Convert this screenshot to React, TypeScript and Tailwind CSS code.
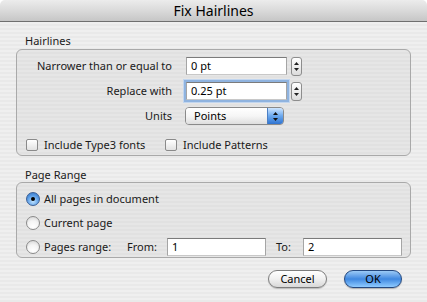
const stripes =
  "bg-[repeating-linear-gradient(180deg,#efefef_0px,#efefef_2px,#e9e9e9_2px,#e9e9e9_4px)]";
const groupBg =
  "bg-[repeating-linear-gradient(180deg,#e6e6e6_0px,#e6e6e6_2px,#e1e1e1_2px,#e1e1e1_4px)]";

function Stepper() {
  return (
    <div className="ml-[4px] flex h-[19px] w-[11px] flex-col items-center justify-center gap-[3px] rounded-[3px] border border-[#8d8d8d] bg-gradient-to-b from-white to-[#dcdcdc]">
      <svg width="5" height="3" viewBox="0 0 5 3">
        <path d="M2.5 0 L5 3 L0 3 Z" fill="#222" />
      </svg>
      <svg width="5" height="3" viewBox="0 0 5 3">
        <path d="M0 0 L5 0 L2.5 3 Z" fill="#222" />
      </svg>
    </div>
  );
}

function Field({ value, w, focus }: { value: string; w: string; focus?: boolean }) {
  return (
    <div
      className={`flex h-[18px] items-center border border-t-[#7b7b7b] border-x-[#a5a5a5] border-b-[#c8c8c8] bg-white pl-[4px] text-black ${w} ${
        focus ? "shadow-[0_0_0_2px_#8fb3df,0_0_0_3px_#c2d6ef]" : ""
      }`}
    >
      {value}
    </div>
  );
}

function Checkbox({ label, w }: { label: string; w?: string }) {
  return (
    <div className={`flex items-center ${w ?? ""}`}>
      <div className="h-[12px] w-[12px] rounded-[2px] border border-[#8a8a8a] bg-gradient-to-b from-white to-[#e2e2e2]" />
      <span className="ml-[6px]">{label}</span>
    </div>
  );
}

function Radio({ checked }: { checked?: boolean }) {
  return checked ? (
    <div className="flex h-[14px] w-[14px] items-center justify-center rounded-full border border-[#3a5f96] bg-[radial-gradient(circle_at_50%_70%,#bfe2ff_0%,#5a9de6_55%,#2f6fc0_100%)]">
      <div className="h-[4px] w-[4px] rounded-full bg-black" />
    </div>
  ) : (
    <div className="h-[14px] w-[14px] rounded-full border border-[#8a8a8a] bg-[radial-gradient(circle_at_50%_80%,#ffffff_0%,#f4f4f4_50%,#d0d0d0_100%)]" />
  );
}

export default function App() {
  return (
    <div className="h-[302px] w-[427px] overflow-hidden font-['Lucida_Grande','Noto_Sans','DejaVu_Sans',sans-serif] text-[11px] text-[#1a1a1a]">
      {/* title bar */}
      <div className="flex h-[22px] items-center justify-center rounded-t-[5px] border-b border-[#6f6f6f] bg-gradient-to-b from-[#ececec] via-[#dadada] to-[#c6c6c6] text-[14px] text-black">
        Fix Hairlines
      </div>

      <div className={`h-[280px] px-[16px] pt-[12px] ${stripes}`}>
        <div className="pl-[9px] leading-[14px]">Hairlines</div>
        <div className={`mt-[1px] rounded-[6px] border border-[#a9a9a9] pt-[7px] pb-[1px] ${groupBg}`}>
          <div className="flex h-[18px] items-center">
            <div className="w-[155px] text-right">Narrower than or equal to</div>
            <div className="ml-[14px]">
              <Field value="0 pt" w="w-[101px]" />
            </div>
            <Stepper />
          </div>
          <div className="mt-[7px] flex h-[18px] items-center">
            <div className="w-[155px] text-right">Replace with</div>
            <div className="ml-[14px]">
              <Field value="0.25 pt" w="w-[101px]" focus />
            </div>
            <Stepper />
          </div>
          <div className="mt-[7px] flex h-[18px] items-center">
            <div className="w-[155px] text-right">Units</div>
            <div className="ml-[13px] flex h-[18px] w-[99px] overflow-hidden rounded-[4px] border border-[#8a8a8a]">
              <div className="flex flex-1 items-center bg-gradient-to-b from-white via-[#f6f6f6] to-[#dedede] pl-[8px] text-black">
                Points
              </div>
              <div className="flex w-[16px] flex-col items-center justify-center gap-[3px] border-l border-[#4c7fc4] bg-gradient-to-b from-[#cfe6ff] via-[#6aa8ee] to-[#2f73d0]">
                <svg width="5" height="3" viewBox="0 0 5 3">
                  <path d="M2.5 0 L5 3 L0 3 Z" fill="#111" />
                </svg>
                <svg width="5" height="3" viewBox="0 0 5 3">
                  <path d="M0 0 L5 0 L2.5 3 Z" fill="#111" />
                </svg>
              </div>
            </div>
          </div>
          <div className="mt-[11px] flex h-[18px] items-center pl-[9px]">
            <Checkbox label="Include Type3 fonts" w="w-[139px]" />
            <Checkbox label="Include Patterns" />
          </div>
        </div>

        <div className="mt-[12px] pl-[9px] leading-[14px]">Page Range</div>
        <div className={`flex flex-col rounded-[6px] border border-[#a9a9a9] pt-[7px] pb-[1px] ${groupBg}`}>
          <div className="flex h-[18px] items-center pl-[9px]">
            <Radio checked />
            <span className="ml-[4px]">All pages in document</span>
          </div>
          <div className="mt-[6px] flex h-[18px] items-center pl-[9px]">
            <Radio />
            <span className="ml-[4px]">Current page</span>
          </div>
          <div className="mt-[6px] flex h-[18px] items-center pl-[9px]">
            <Radio />
            <span className="ml-[4px] w-[83px]">Pages range:</span>
            <span className="w-[40px]">From:</span>
            <Field value="1" w="w-[99px]" />
            <span className="ml-[10px] w-[27px]">To:</span>
            <Field value="2" w="w-[99px]" />
          </div>
        </div>

        <div className="mt-[12px] flex justify-end gap-[17px] pr-[9px]">
          <button className="flex h-[18px] w-[59px] items-center justify-center rounded-full border border-[#7d7d7d] bg-gradient-to-b from-white via-[#f0f0f0] to-[#d8d8d8] text-[11px] text-black shadow-[0_1px_1px_rgba(0,0,0,0.2)]">
            Cancel
          </button>
          <button className="flex h-[18px] w-[58px] items-center justify-center rounded-full border border-[#24487f] bg-gradient-to-b from-[#9ccaf5] via-[#3f88e0] to-[#8fcbff] text-[11px] text-black shadow-[0_1px_1px_rgba(0,0,0,0.25)]">
            OK
          </button>
        </div>
      </div>
    </div>
  );
}
